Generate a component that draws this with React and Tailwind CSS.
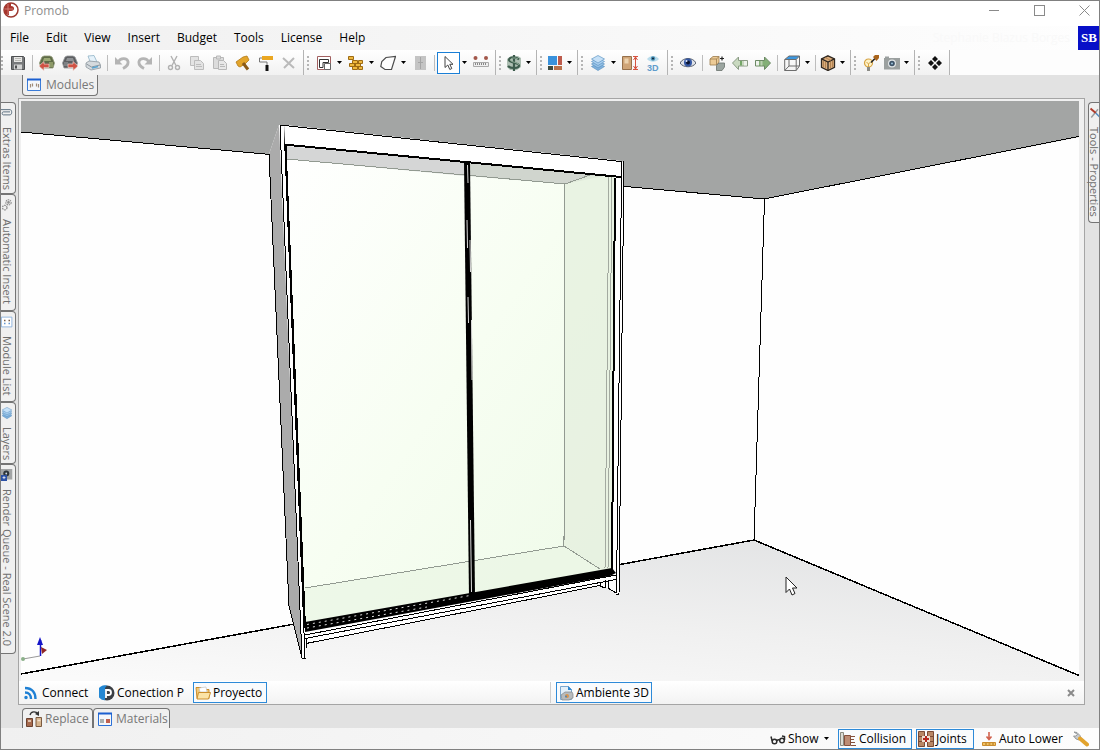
import clsx from 'clsx'

const icons = {
  save: (
    <>
      <path d="M1.500 1.500h12l1 1v12h-13z" fill="#77797b" stroke="#4d4f51" />
      <path d="M4 2h8v5H4z" fill="#e8e8e6" />
      <path d="M5 3.500h6M5 5.500h6" stroke="#b9b9b5" />
      <path d="M4 9.500h8v5H4z" fill="#d2d3d3" />
      <path d="M5 10.500h2v3H5z" fill="#4d4f51" />
    </>
  ),
  bagIn: (
    <>
      <path d="M3 2l2-1h6l2 1 2.500 6-1.500 5H2L.5 8z" fill="#5e6b47" stroke="#8d9673" strokeWidth=".8" />
      <path d="M5 3h6l1 3H4z" fill="#9aa874" />
      <path d="M10 7h4v5h-4z" fill="#8d9a68" />
      <path d="M6 8h4v5H6z" fill="#5b3a2a" />
      <path d="M0 11l5-4.500v2.500h5v3.500H5V15.500z" fill="#cf5244" stroke="#f0d5cf" strokeWidth=".7" />
    </>
  ),
  bagOut: (
    <>
      <path d="M3 2l2-1h6l2 1 2.500 6-1.500 5H2L.5 8z" fill="#5c5e61" stroke="#96989b" strokeWidth=".8" />
      <path d="M5 3h6l1 3H4z" fill="#8e9194" />
      <path d="M2 7h4v4H2z" fill="#7e8184" />
      <path d="M16 11l-5-4.500v2.500H6v3.500h5V15.500z" fill="#cf5244" stroke="#f0d5cf" strokeWidth=".7" />
    </>
  ),
  print: (
    <>
      <path d="M3 1l6-.5L12 7 6 9z" fill="#e6f2fa" stroke="#8fb2c6" strokeWidth=".8" />
      <path d="M1 8l3-2 10 1 1.500 3v3L6 15l-5-3z" fill="#d5dade" stroke="#8d979e" strokeWidth=".8" />
      <path d="M1.500 9l5 3 8.500-2" fill="none" stroke="#8d979e" />
      <path d="M7 13l6-1.500" stroke="#5aa5d2" strokeWidth="1.500" />
    </>
  ),
  undo: (
    <>
      <path d="M1 2v7.500h7.500z" fill="#b4b4b4" />
      <path d="M4 7c2.500-4.500 9-4.500 10-.5.5 3-2 5.500-5 7" fill="none" stroke="#b4b4b4" strokeWidth="2.800" />
    </>
  ),
  redo: (
    <>
      <path d="M15 2v7.500H7.500z" fill="#b4b4b4" />
      <path d="M12 7C9.500 2.500 3 2.500 2 6.500c-.5 3 2 5.500 5 7" fill="none" stroke="#b4b4b4" strokeWidth="2.800" />
    </>
  ),
  cut: (
    <g fill="none" stroke="#b1b1b1" strokeWidth="1.400">
      <path d="M5 1l5 9.500M11 1L6 10.500" />
      <circle cx="4.500" cy="12.500" r="2" />
      <circle cx="11.500" cy="12.500" r="2" />
    </g>
  ),
  copy: (
    <g fill="#e3e3e3" stroke="#bcbcbc">
      <path d="M1.500 1.500h8v9h-8z" />
      <path d="M5.500 5.500h6l3 3v6h-9z" />
      <path d="M7 9.500h5M7 11.500h6" />
    </g>
  ),
  paste: (
    <g fill="#dcdcdc" stroke="#b8b8b8">
      <path d="M1.500 2.500h10v11h-10z" />
      <path d="M4.500 1h4v3h-4z" />
      <path d="M6.500 5.500h5l3 3v6h-8z" fill="#e8e8e8" />
      <path d="M8 9.500h4M8 11.500h5" />
    </g>
  ),
  hammer: (
    <>
      <path d="M1 7l7-5 4-1 2 4-4 4-5 3-2-1z" fill="#e3a52b" stroke="#b37a17" strokeWidth=".8" />
      <path d="M8 8l5 6.500" stroke="#8a5a18" strokeWidth="3" />
    </>
  ),
  roller: (
    <>
      <path d="M4 1h11v4H4z" fill="#eaa722" />
      <path d="M4 3H1.500v4H9v3" fill="none" stroke="#777" />
      <path d="M7.500 10h3v6h-3z" fill="#111" />
    </>
  ),
  remove: <path d="M2 3l11 10M13 3L3 13" stroke="#bababa" strokeWidth="2" />,
  wall: (
    <>
      <path d="M1.500 1.500h13v13h-13z" fill="#fff" stroke="#a26060" />
      <path d="M3.500 12.500V4.500H12.500v3H7v5z" fill="#fff" stroke="#333" />
      <path d="M8.500 8.500h6v6h-6z" fill="#fff" stroke="#666" />
    </>
  ),
  bricks: (
    <g fill="#efb93f" stroke="#9d6a13">
      <path d="M.5 1.500h5v3h-5zM4.500 5.500h5v3h-5zM10.500 5.500h4v3h-4zM1.500 8.500h5v3h-5zM7.500 8.500h5v3h-5zM4.500 11.500h5v3h-5zM10.500 11.500h4v3h-4z" />
    </g>
  ),
  shape: <path d="M6 2.500L15.500 1.500 11.500 14.500H5L.8 11.500l1-5z" fill="#fdfdfd" stroke="#4b4b4b" strokeWidth="1.200" />,
  cabinet: (
    <>
      <path d="M3 1h11v14H3z" fill="#c4c4c4" />
      <path d="M8.500 2v12M6 7.500h5" stroke="#a5a5a5" />
    </>
  ),
  pointer: <path d="M4 1.500v11l2.800-2.500 2 4.500 2-1-2-4.200H12z" fill="#fff" stroke="#444" />,
  ruler: (
    <>
      <circle cx="2.500" cy="3" r="2" fill="#a2574a" />
      <circle cx="13" cy="3" r="2" fill="#a2574a" />
      <path d="M.5 7.500h15v4H.5z" fill="#efefef" stroke="#aaa" />
      <path d="M2.500 8v2M4.500 8v2M6.500 8v2M8.500 8v2M10.500 8v2M12.500 8v2" stroke="#888" />
    </>
  ),
  dollar: (
    <>
      <path d="M1 4l4-3h7l3 2v9l-4 3H4l-3-3z" fill="#aebfb3" />
      <path d="M13 4.500C10 1.500 3 2 3 5s10 2.500 10 5.500-8 3.500-11 .5M8 0v16" fill="none" stroke="#3d5c4d" strokeWidth="2.200" />
      <path d="M12 4C10 2.500 4.500 2.500 4.500 5s8 2 8 5" fill="none" stroke="#a3bfa9" strokeWidth=".8" />
    </>
  ),
  materials: (
    <>
      <path d="M1 1h9v9H1z" fill="#3a92dc" />
      <path d="M11 1h4v9h-4z" fill="#bd5b4c" />
      <path d="M1 11h5v4H1z" fill="#3e4b40" />
      <path d="M7 11h8v4H7z" fill="#b9714a" />
    </>
  ),
  layers: (
    <g stroke="#5f95c3" strokeWidth=".7">
      <path d="M8 8l6.500 3.500L8 15.500l-6.500-4z" fill="#7fb0dc" />
      <path d="M8 5.500L14.500 9 8 13 1.500 9z" fill="#95c1e6" />
      <path d="M8 3l6.500 3.500-6.500 4-6.500-4z" fill="#aacff0" />
      <path d="M8 .5L14.500 4 8 8 1.500 4z" fill="#c5e0f7" />
    </g>
  ),
  door: (
    <>
      <path d="M.5 1.500h9v13h-9z" fill="#cfa477" stroke="#96704b" />
      <path d="M2.500 3.500h4v5h-4z" fill="#ecd2ae" />
      <path d="M11 1.500h5M11 14.500h5M13.500 2v12M11.500 5l2-3 2 3M11.500 11l2 3 2-3" fill="none" stroke="#d6523f" />
    </>
  ),
  cube: (
    <>
      <path d="M8 .8l6.500 3v8.500L8 15.500l-6.500-3.200V3.800z" fill="#dcae7d" stroke="#302820" strokeWidth="1.300" />
      <path d="M1.500 3.800L8 7l6.500-3.200M8 7v8.500" fill="none" stroke="#302820" strokeWidth="1.300" />
      <path d="M3.500 6v6M5.500 7v6M10.500 7v6M12.500 6v6M5 2.500l6 3" stroke="#a87848" strokeWidth=".8" />
    </>
  ),
  eye: (
    <>
      <path d="M0 8c3-6 13-6 16 0-3 5-13 5-16 0z" fill="#dfe2e8" stroke="#555e6d" />
      <circle cx="8" cy="7.500" r="4" fill="#3558a5" />
      <circle cx="8" cy="7.500" r="2" fill="#0b1430" />
      <circle cx="6.500" cy="6" r="1" fill="#dfe9ff" />
    </>
  ),
  eye3d: (
    <>
      <path d="M2 4c3-4 9-4 12 0-3 3.500-9 3.500-12 0z" fill="#b9dcec" />
      <circle cx="8" cy="3.500" r="2.200" fill="#4a90b5" />
      <circle cx="8" cy="3.500" r="1" fill="#123" />
      <text x="2" y="15.500" fontSize="9" fontWeight="700" fill="#5f9ccc" fontFamily="Liberation Sans, sans-serif">3D</text>
    </>
  ),
  boxes: (
    <>
      <path d="M1 4l3-2.500h6V7L7.500 10H1z" fill="#edcb96" stroke="#9b7b4d" strokeWidth=".8" />
      <path d="M1 4h6.500v6M7.500 4L10 1.500" fill="none" stroke="#9b7b4d" strokeWidth=".8" />
      <path d="M7.500 10.500L10 8h5.500v4L13 15.500H7.500z" fill="#9ba5a0" stroke="#68716c" strokeWidth=".8" />
      <path d="M11 3.500h4M13 1.500v4" stroke="#222" strokeWidth="1.200" />
    </>
  ),
  arrowLeft: (
    <>
      <path d="M.5 8l6-6v3.500h9v5.500h-9v3.500z" fill="#c9d9c0" stroke="#8a9b84" />
      <path d="M8 6h2v4.500H8z" fill="#75a768" />
      <path d="M12 6h3v4.500h-3z" fill="#eef2ec" />
    </>
  ),
  arrowRight: (
    <>
      <path d="M15.500 8l-6-6v3.500h-9v5.500h9v3.500z" fill="#84b077" stroke="#6c8965" />
      <path d="M1 6h3v4.500H1z" fill="#eef2ec" />
      <path d="M5.500 6h2v4.500h-2z" fill="#bcd1b2" />
    </>
  ),
  wireCube: (
    <>
      <path d="M1 4.500L5 1h10.500L12 4.500z" fill="#3b97e0" />
      <path d="M.7 4.500h11.500v11H.7zM.7 4.500L5 1h10.500v10l-3.300 4.500M12.200 4.500L15.500 1M5 5v6h10M5 11L.7 15.500" fill="none" stroke="#6d6d6d" />
    </>
  ),
  bulb: (
    <>
      <circle cx="5.500" cy="8" r="4" fill="#fff3c8" stroke="#d6a445" strokeWidth="1.200" />
      <path d="M3.500 7l2 2 2-2M5.500 9v3" fill="none" stroke="#d6a445" />
      <path d="M4 12h3v4H4z" fill="#8b8b85" />
      <path d="M8 7.500l4-4" stroke="#222" strokeWidth="1.600" />
      <path d="M10 2l2-2h4v3l-2.500 3z" fill="#a9641b" />
    </>
  ),
  camera: (
    <>
      <path d="M0 3h1V1.500h4V3h11v11.500H0z" fill="#9ba09f" />
      <circle cx="8" cy="8.500" r="4" fill="#e2e6e8" />
      <circle cx="8" cy="8.500" r="2.800" fill="#3e5468" />
      <circle cx="8" cy="8.500" r="1" fill="#9cc2dc" />
    </>
  ),
  diamonds: <path d="M8 1l3 3-3 3-3-3zM4 5l3 3-3 3-3-3zM12 5l3 3-3 3-3-3zM8 9l3 3-3 3-3-3z" fill="#111" />,
  modules: (
    <>
      <path d="M1.500 2.500h13v11h-13z" fill="#f5f7fa" stroke="#3b7cd8" />
      <path d="M1 2.500h14" stroke="#1b5fd0" strokeWidth="2" />
      <path d="M4.500 7v3.500M6.500 6.500v3M10.500 6.500v3M12.500 7v3.500" stroke="#a08c78" strokeWidth="1.200" />
    </>
  ),
  palette: (
    <>
      <path d="M1.500 2.500h13v12h-13z" fill="#f5f7fa" stroke="#2a70d8" />
      <path d="M1 2.500h14" stroke="#1b5fd0" strokeWidth="2" />
      <path d="M3 8h4v4H3z" fill="#a8b0b0" />
      <path d="M9 8h4v4H9z" fill="#c0614f" />
    </>
  ),
  replace: (
    <>
      <path d="M4 4c1-4 6-4 8-1" fill="none" stroke="#333" strokeWidth="1.300" />
      <path d="M13 0v5l-4-2z" fill="#333" />
      <path d="M.5 7.500h6v8h-6z" fill="#a66a4e" stroke="#6a4230" />
      <path d="M10 6.500h5.500v9H10z" fill="#d6b48e" stroke="#7b5b40" />
      <path d="M2 10h3M11.500 9.500h3" stroke="#f4e2cf" strokeWidth="1.500" />
    </>
  ),
  rss: (
    <g fill="none" stroke="#1f80d4" strokeWidth="2.400">
      <circle cx="2" cy="12.500" r="1" fill="#1f80d4" strokeWidth="1.500" />
      <path d="M1 7.500c4 0 6 2.500 6 6.500M1 3c7 0 10.500 4.500 10.500 11" />
    </g>
  ),
  pround: (
    <>
      <circle cx="8" cy="8" r="7.500" fill="#3b3f44" />
      <path d="M8 .5A7.500 7.500 0 1 0 6 15.200V3z" fill="#2387d3" />
      <path d="M7 13V5h2.500a2.500 2.500 0 0 1 0 5H7" fill="none" stroke="#fff" strokeWidth="1.800" />
    </>
  ),
  folder: (
    <>
      <path d="M1 2.500h5l1 2h7v9H2z" fill="#f0c878" stroke="#cc8f2d" />
      <path d="M4 3l7-1 1 5H5z" fill="#fff" stroke="#bbb" strokeWidth=".6" />
      <path d="M3.500 7.500h12l-2 6.500H2z" fill="#fbe3a6" stroke="#cc8f2d" />
    </>
  ),
  ambient: (
    <>
      <path d="M2.500 1.500h8l3 3v10h-11z" fill="#e3f0fa" stroke="#7aa7cf" />
      <path d="M10 1l4 4h-4z" fill="#2d86cf" />
      <path d="M3 10l4-3h7l1 2v4l-4 2H4z" fill="#b7bbbd" stroke="#7f8588" strokeWidth=".7" />
      <circle cx="9" cy="11" r="2" fill="#d9944d" />
      <circle cx="8" cy="11.500" r="1" fill="#4b85b8" />
    </>
  ),
  glasses: (
    <g fill="none" stroke="#2b2b2b" strokeWidth="1.500">
      <circle cx="4.500" cy="10.500" r="2.300" />
      <circle cx="12" cy="9.500" r="2.300" />
      <path d="M7 10c.5-1.500 2-1.500 2.500-.5M2.200 10L1 5.500M14.500 9V5.500L12 5" />
    </g>
  ),
  collision: (
    <>
      <path d="M.5 1.500h3v13h-3z" fill="#dcdcd6" stroke="#8b8b80" />
      <path d="M4.500 4.500h6v10h-6z" fill="#bd8c74" stroke="#85503c" />
      <path d="M11 5.500h4M11 8.500h3M11 11.500h4M11 14.500h5" stroke="#85503c" />
    </>
  ),
  joints: (
    <>
      <path d="M.5.500h6v15h-6zM9.500.500h6v15h-6z" fill="#b88765" stroke="#7b4b35" />
      <path d="M1 5.500h5M1 10.500h5M10 5.500h5M10 10.500h5" stroke="#7b4b35" />
      <path d="M4 5h8v6H4z" fill="#eee0d4" />
      <path d="M8 5v6M5 8h6" stroke="#b5271d" strokeWidth="2" />
    </>
  ),
  lower: (
    <>
      <path d="M8 1v7M5.500 5.500L8 8.500l2.500-3" fill="none" stroke="#d0614d" strokeWidth="1.600" />
      <path d="M1.500 11.500h13v3h-13z" fill="#f3c262" stroke="#c98b2c" />
      <path d="M4 13h2M7.500 13h2M11 13h2" stroke="#a56f1c" />
    </>
  ),
  wrench: (
    <>
      <path d="M1 1l3 .5 3 3 1 3-2 1.500-3-1-2.500-3L3 5l1.500-1.500z" fill="#c7cacc" stroke="#85898b" strokeWidth=".8" />
      <path d="M7 7.500l7 6" stroke="#e2a32d" strokeWidth="4" strokeLinecap="round" />
    </>
  ),
  clip: <path d="M0 3.500h12c3 0 3 7 0 7H3c-2 0-2-4 0-4h9" fill="none" stroke="#5a6f80" strokeWidth="1.300" />,
  gears: (
    <g fill="none" stroke="#8c8c8c" strokeWidth="1.600">
      <circle cx="10" cy="4.500" r="3.500" strokeDasharray="2 1" />
      <circle cx="10" cy="4.500" r="1" />
      <circle cx="5" cy="11.500" r="3" strokeDasharray="2 1" />
    </g>
  ),
  list: (
    <>
      <path d="M.5 1.500h14v13H.5z" fill="#fff" stroke="#76a4d8" />
      <path d="M4 5h2v2H4zM10 5h2v2h-2z" fill="#775a44" />
      <path d="M4 10h2M10 10h2" stroke="#6597d0" strokeWidth="2" />
    </>
  ),
  render: (
    <>
      <path d="M0 0h15v14H0z" fill="#a2a4a5" />
      <circle cx="7" cy="6" r="4" fill="#2e353b" />
      <circle cx="7" cy="6" r="1.200" fill="#d5dde4" />
      <path d="M0 8h8v8H0z" fill="#2b50a5" />
      <path d="M4 9.500v4M2 11.500h4" stroke="#fff" />
    </>
  ),
  tools: (
    <>
      <path d="M3 14L12 3" stroke="#9a9d9f" strokeWidth="2" />
      <path d="M2 2l7 6" stroke="#b03c2c" strokeWidth="2.600" />
      <path d="M9 8l5 5" stroke="#4d8ac0" strokeWidth="2" />
    </>
  ),
}

function Icon({ name, size = 16 }) {
  return (
    <svg width={size} height={size} viewBox="0 0 16 16" className="shrink-0" aria-hidden="true">
      {icons[name]}
    </svg>
  )
}

function Caret() {
  return (
    <svg width="5" height="3" viewBox="0 0 5 3" aria-hidden="true">
      <path d="M0 0h5L2.500 3z" fill="#000" />
    </svg>
  )
}

// '|' is a separator, 'v' a drop-down arrow, a leading '-' marks a narrow button
const toolGroups = [
  ['save', '|', 'bagIn', 'bagOut', 'print', '|', 'undo', 'redo', '|', 'cut', 'copy', 'paste', 'hammer', 'roller', 'remove'],
  ['wall', 'v', 'bricks', 'v', 'shape', 'v', 'cabinet', '|', 'pointer', 'v', 'ruler'],
  ['-dollar', 'v'],
  ['-materials', 'v'],
  ['layers', 'v', 'door', 'eye3d'],
  ['eye', '|', 'boxes', 'arrowLeft', 'arrowRight', '|', 'wireCube', 'v', '|', '-cube', 'v'],
  ['bulb', '-camera', 'v'],
  ['diamonds'],
]

const menus = ['File', 'Edit', 'View', 'Insert', 'Budget', 'Tools', 'License', 'Help']

const sideTabs = [
  { label: 'Extras Items', icon: 'clip', height: 'h-[92px]' },
  { label: 'Automatic Insert', icon: 'gears', height: 'h-[117px]' },
  { label: 'Module List', icon: 'list', height: 'h-[91px]' },
  { label: 'Layers', icon: 'layers', height: 'h-[62px]' },
  { label: 'Render Queue - Real Scene 2.0', icon: 'render', height: 'h-[190px]' },
]

function ToolItem({ item }) {
  if (item === '|') {
    return <span className="flex w-[6px] justify-center"><span className="h-4 w-px bg-[#bdbdbd]" /></span>
  }
  if (item === 'v') {
    return <button aria-label="More" className="flex h-full w-[9px] items-center justify-center"><Caret /></button>
  }
  const narrow = item.startsWith('-')
  const name = narrow ? item.slice(1) : item
  return (
    <button
      aria-label={name}
      className={clsx('flex h-[22px] items-center justify-center', narrow ? 'w-5' : 'w-[23px]', name === 'pointer' && 'border border-[#1a7fd6] bg-white')}
    >
      <Icon name={name} />
    </button>
  )
}

function TitleBar() {
  return (
    <header className="flex h-[25px] shrink-0 items-start bg-white">
      <svg width="16" height="16" viewBox="0 0 16 16" className="ml-[2px] mt-px" aria-hidden="true">
        <circle cx="8" cy="8" r="7" fill="#fff" stroke="#9d3a31" strokeWidth="1.500" />
        <path d="M8 1a7 7 0 0 0-5 11.500L6 13V9h2z" fill="#a8342c" />
        <path d="M8 4c4 0 4 5 0 5z" fill="#a8342c" />
        <path d="M5 2v10M2 7h8" stroke="#d98a80" strokeWidth=".8" />
      </svg>
      <span className="ml-[5px] mt-px leading-[18px] text-[#8d8d8d]">Promob</span>
      <div className="ml-auto flex gap-[15px]">
        <button aria-label="Minimize" className="flex h-[18px] w-[30px] items-center justify-center">
          <span className="h-px w-[10px] bg-[#8a8a8a]" />
        </button>
        <button aria-label="Maximize" className="flex h-[18px] w-[30px] items-center justify-center">
          <span className="size-[11px] border border-[#8a8a8a]" />
        </button>
        <button aria-label="Close" className="flex h-[18px] w-[30px] items-center justify-center">
          <svg width="11" height="11" viewBox="0 0 11 11" aria-hidden="true"><path d="M.5.500l10 10M10.500.500l-10 10" stroke="#8a8a8a" /></svg>
        </button>
      </div>
    </header>
  )
}

function SideTab({ tab }) {
  return (
    <button
      className={clsx('flex w-[15px] flex-col items-start gap-2 rounded-r border border-l-0 border-[#747474] bg-[#f0f0f0] pt-1', tab.height)}
    >
      <Icon name={tab.icon} size={12} />
      <span className="whitespace-nowrap text-[11px] leading-[12px] text-[#6e6e6e] [writing-mode:vertical-rl]">{tab.label}</span>
    </button>
  )
}

function Scene() {
  return (
    <svg className="block size-full" viewBox="21 101 1058 580" preserveAspectRatio="none" role="img" aria-label="3D view">
      <defs>
        <linearGradient id="floor" x1="0.1" y1="1" x2="0.75" y2="0">
          <stop offset="0" stopColor="#fafafa" />
          <stop offset="0.5" stopColor="#f0f0f0" />
          <stop offset="1" stopColor="#e3e4e5" />
        </linearGradient>
        <linearGradient id="glass" x1="0" y1="0" x2="1" y2="1">
          <stop offset="0" stopColor="#ffffff" />
          <stop offset="0.5" stopColor="#f7fef2" />
          <stop offset="1" stopColor="#eefae8" />
        </linearGradient>
      </defs>
      <path d="M21 101h1058v580H21z" fill="#fefefe" />
      <path d="M21 101h1058v36L764 199 21 132z" fill="#a3a5a4" />
      <path d="M21 674L754 540l325 136v5H21z" fill="url(#floor)" />
      <g stroke="#000" fill="none" shapeRendering="crispEdges">
        <path d="M21 132L764 199l315-62.500M764.500 199L754 540" />
        <path d="M21 674L754 540l325 135.500" strokeWidth="1.500" />
      </g>

      {/* wardrobe body */}
      <path d="M279 125l-10 29 20 452 13 52h4v-14l294-58 8 2 8 6h3l5-432-3-1L284 125z" fill="#fff" />
      <path d="M279 125l-10 29 20 452 13 52z" fill="#ababab" />
      <path d="M269 154l20 452 13 52" fill="none" stroke="#000" shapeRendering="crispEdges" />
      <path d="M280 125h4l21 533h-3z" fill="#fff" stroke="#000" shapeRendering="crispEdges" />
      <path d="M284 125l337 36v16L285 144z" fill="#fff" />

      {/* interior */}
      <path d="M286 146l329 31-3 392-307 53z" fill="url(#glass)" />
      <path d="M286 146l180 16v14l-179-17z" fill="#d5d6d6" />
      <path d="M469 163l135 13-39 8-96-8z" fill="#d0d5ce" />
      <path d="M565 184l25-8.500 25 2-3 391.500-12 1-36-24z" fill="#e4efde" opacity=".75" />
      <path d="M305 588l259-42 36 24-295 52z" fill="#eaf5e4" opacity=".7" />
      <g stroke="#929a91" fill="none" shapeRendering="crispEdges">
        <path d="M287 159l278 25 25-9M565 184l-1 362 36 23M564 546l-259 42" />
        <path d="M609 177l-4 391M612 177l-4 391" stroke="#a3aaa0" />
      </g>

      {/* door frames */}
      <g stroke="#000" fill="none" shapeRendering="crispEdges">
        <path d="M284 125.500L621 161.500" />
        <path d="M284 144.500l337 32.500" strokeWidth="2" />
        <path d="M285.500 146L305 628" strokeWidth="2" />
        <path d="M615 178l-3 392" strokeWidth="2" />
        <path d="M621.500 161v16L616.500 593M624 161L619 594h-3" />
      </g>
      <path d="M464 162h6l5 434-6 1z" fill="#000" />
      <path d="M467.500 165l.5 18M467 220l.5 28M470 240l.5 32M468 297l.5 26M471.500 320l.5 60M470.500 520l1 72" stroke="#ddd" />
      <path d="M305 622l307-54 4 5-6 3-305 56z" fill="#000" />
      <path d="M307 624.500l163-29M307 628l120-21" stroke="#ddd" strokeDasharray="2 4" />
      <g stroke="#000" fill="none" shapeRendering="crispEdges">
        <path d="M305 635l311-60M305 638.500l311-59M306 643.500L600 585.500M306 638v10" />
        <path d="M600 582v4l5 2M605 580v8M608 580v8l8 5" />
      </g>

      {/* axis marker */}
      <path d="M40.500 656v-16" stroke="#1515c8" strokeWidth="1.500" />
      <path d="M40 637l3 8h-6z" fill="#1515c8" />
      <path d="M40 656l-17 3" stroke="#999" />
      <circle cx="23" cy="659" r="2" fill="#8bb089" />
      <path d="M41 647l6 3-5 4z" fill="#8e2727" />

      {/* mouse pointer */}
      <path d="M786 577v15.500l3.500-3.500 2.500 6 3-1.500-2.500-5.500h4.500z" fill="#fff" stroke="#222" />
    </svg>
  )
}

function BarButton({ icon, label, active, children, className }) {
  return (
    <button
      className={clsx('flex items-center whitespace-nowrap border', active ? 'border-[#2d8ad8] bg-[#f9fbfd]' : 'border-transparent', className)}
    >
      <Icon name={icon} />
      {label}
      {children}
    </button>
  )
}

export default function App() {
  return (
    <div className="flex h-screen flex-col overflow-hidden border border-[#808080] bg-[#e2e2e2] font-['Open_Sans',sans-serif] text-[12px] text-black">
      <TitleBar />

      <nav className="flex h-6 shrink-0 items-center bg-linear-to-r from-[#f0f0f0] to-[#fefefe] pl-[9px]">
        <div className="flex gap-[17px]">
          {menus.map(m => <button key={m}>{m}</button>)}
        </div>
        <span className="ml-auto mr-2 text-[#f9f9f9]">Stephanie Biazus Borges</span>
        <button className="h-6 w-[21px] whitespace-nowrap bg-[#0710c8] pl-[3px] text-left font-['Liberation_Serif',serif] text-[13px] font-bold text-white">SB</button>
      </nav>

      <div className="flex h-[25px] shrink-0 bg-[#fdfdfd]">
        {toolGroups.map((items, i) => (
          <div key={items[0]} className="flex items-center border-r border-[#b4b4b4] bg-linear-to-b from-white to-[#f1f1f1] pr-[3px]">
            <span className={clsx('flex flex-col gap-[2px]', i === 0 ? 'w-[5px]' : 'w-2 pl-[3px]')}>
              {[0, 1, 2, 3].map(n => <span key={n} className="size-[2px] bg-[#b5b5b5]" />)}
            </span>
            {items.map((item, n) => <ToolItem key={n} item={item} />)}
          </div>
        ))}
      </div>

      <div className="flex min-h-0 flex-1">
        <aside className="flex w-[17px] shrink-0 flex-col pt-[27px]">
          {sideTabs.map(t => <SideTab key={t.label} tab={t} />)}
        </aside>

        <main className="flex min-w-0 flex-1 flex-col">
          <div className="flex h-[23px] shrink-0 items-start pl-1">
            <button className="flex h-[21px] w-[76px] items-center gap-1 rounded-b border border-t-0 border-[#747474] bg-[#f0f0f0] pl-[3px] text-[#787878]">
              <Icon name="modules" />
              Modules
            </button>
          </div>

          <section className="flex min-h-0 flex-1 flex-col border border-[#a5a5a5] bg-[#f0f0f0]">
            <div className="min-h-0 flex-1 pl-[2px] pr-[5px] pt-[2px]">
              <Scene />
            </div>
            <div className="flex h-[23px] shrink-0 items-center bg-linear-to-b from-white to-[#f3f3f3] pl-1">
              <BarButton icon="rss" label="Connect" className="h-[21px] w-[75px] gap-[2px]" />
              <BarButton icon="pround" label="Conection P" className="h-[21px] w-[95px] gap-[2px]" />
              <BarButton icon="folder" label="Proyecto" active className="h-[21px] w-[74px] gap-[2px] pl-px" />
              <div className="ml-[283px] flex min-w-0 flex-1 items-center border-l border-[#cfcfcf] pl-[5px]">
                <BarButton icon="ambient" label="Ambiente 3D" active className="h-[21px] w-[96px] gap-[2px] pl-px" />
                <button aria-label="Close view" className="ml-auto mr-[9px]">
                  <svg width="8" height="8" viewBox="0 0 8 8" aria-hidden="true"><path d="M1 1l6 6M7 1L1 7" stroke="#8a8a8a" strokeWidth="2" /></svg>
                </button>
              </div>
            </div>
          </section>

          <div className="flex h-[23px] shrink-0 items-end pl-1 text-[#787878]">
            <button className="flex h-5 w-[71px] items-center gap-[3px] rounded-t border border-b-0 border-[#747474] bg-[#f0f0f0] pl-[3px]">
              <Icon name="replace" />
              Replace
            </button>
            <button className="flex h-5 w-[77px] items-center gap-[3px] rounded-t border border-b-0 border-[#747474] bg-[#f0f0f0] pl-[3px]">
              <Icon name="palette" />
              Materials
            </button>
          </div>
        </main>

        <aside className="w-[14px] shrink-0 pl-[3px] pt-[27px]">
          <button className="flex h-[121px] w-[11px] flex-col items-start gap-2 rounded-l border border-r-0 border-[#747474] bg-[#f0f0f0] pt-1">
            <Icon name="tools" size={12} />
            <span className="whitespace-nowrap text-[11px] leading-[10px] text-[#6e6e6e] [writing-mode:vertical-rl]">Tools - Properties</span>
          </button>
        </aside>
      </div>

      <footer className="flex h-[21px] shrink-0 items-center justify-end bg-linear-to-r from-[#f0f0f0] to-[#fdfdfd] pr-[10px]">
        <BarButton icon="glasses" label="Show" className="h-5 w-[69px] gap-[2px]">
          <span className="ml-1"><Caret /></span>
        </BarButton>
        <BarButton icon="collision" label="Collision" active className="h-5 w-[74px] gap-[3px] pl-px" />
        <BarButton icon="joints" label="Joints" active className="ml-1 h-5 w-[58px] gap-[2px] pl-px" />
        <BarButton icon="lower" label="Auto Lower" className="ml-1 h-5 w-[95px] gap-[2px] pl-[2px]" />
        <button aria-label="Settings"><Icon name="wrench" /></button>
      </footer>
    </div>
  )
}
